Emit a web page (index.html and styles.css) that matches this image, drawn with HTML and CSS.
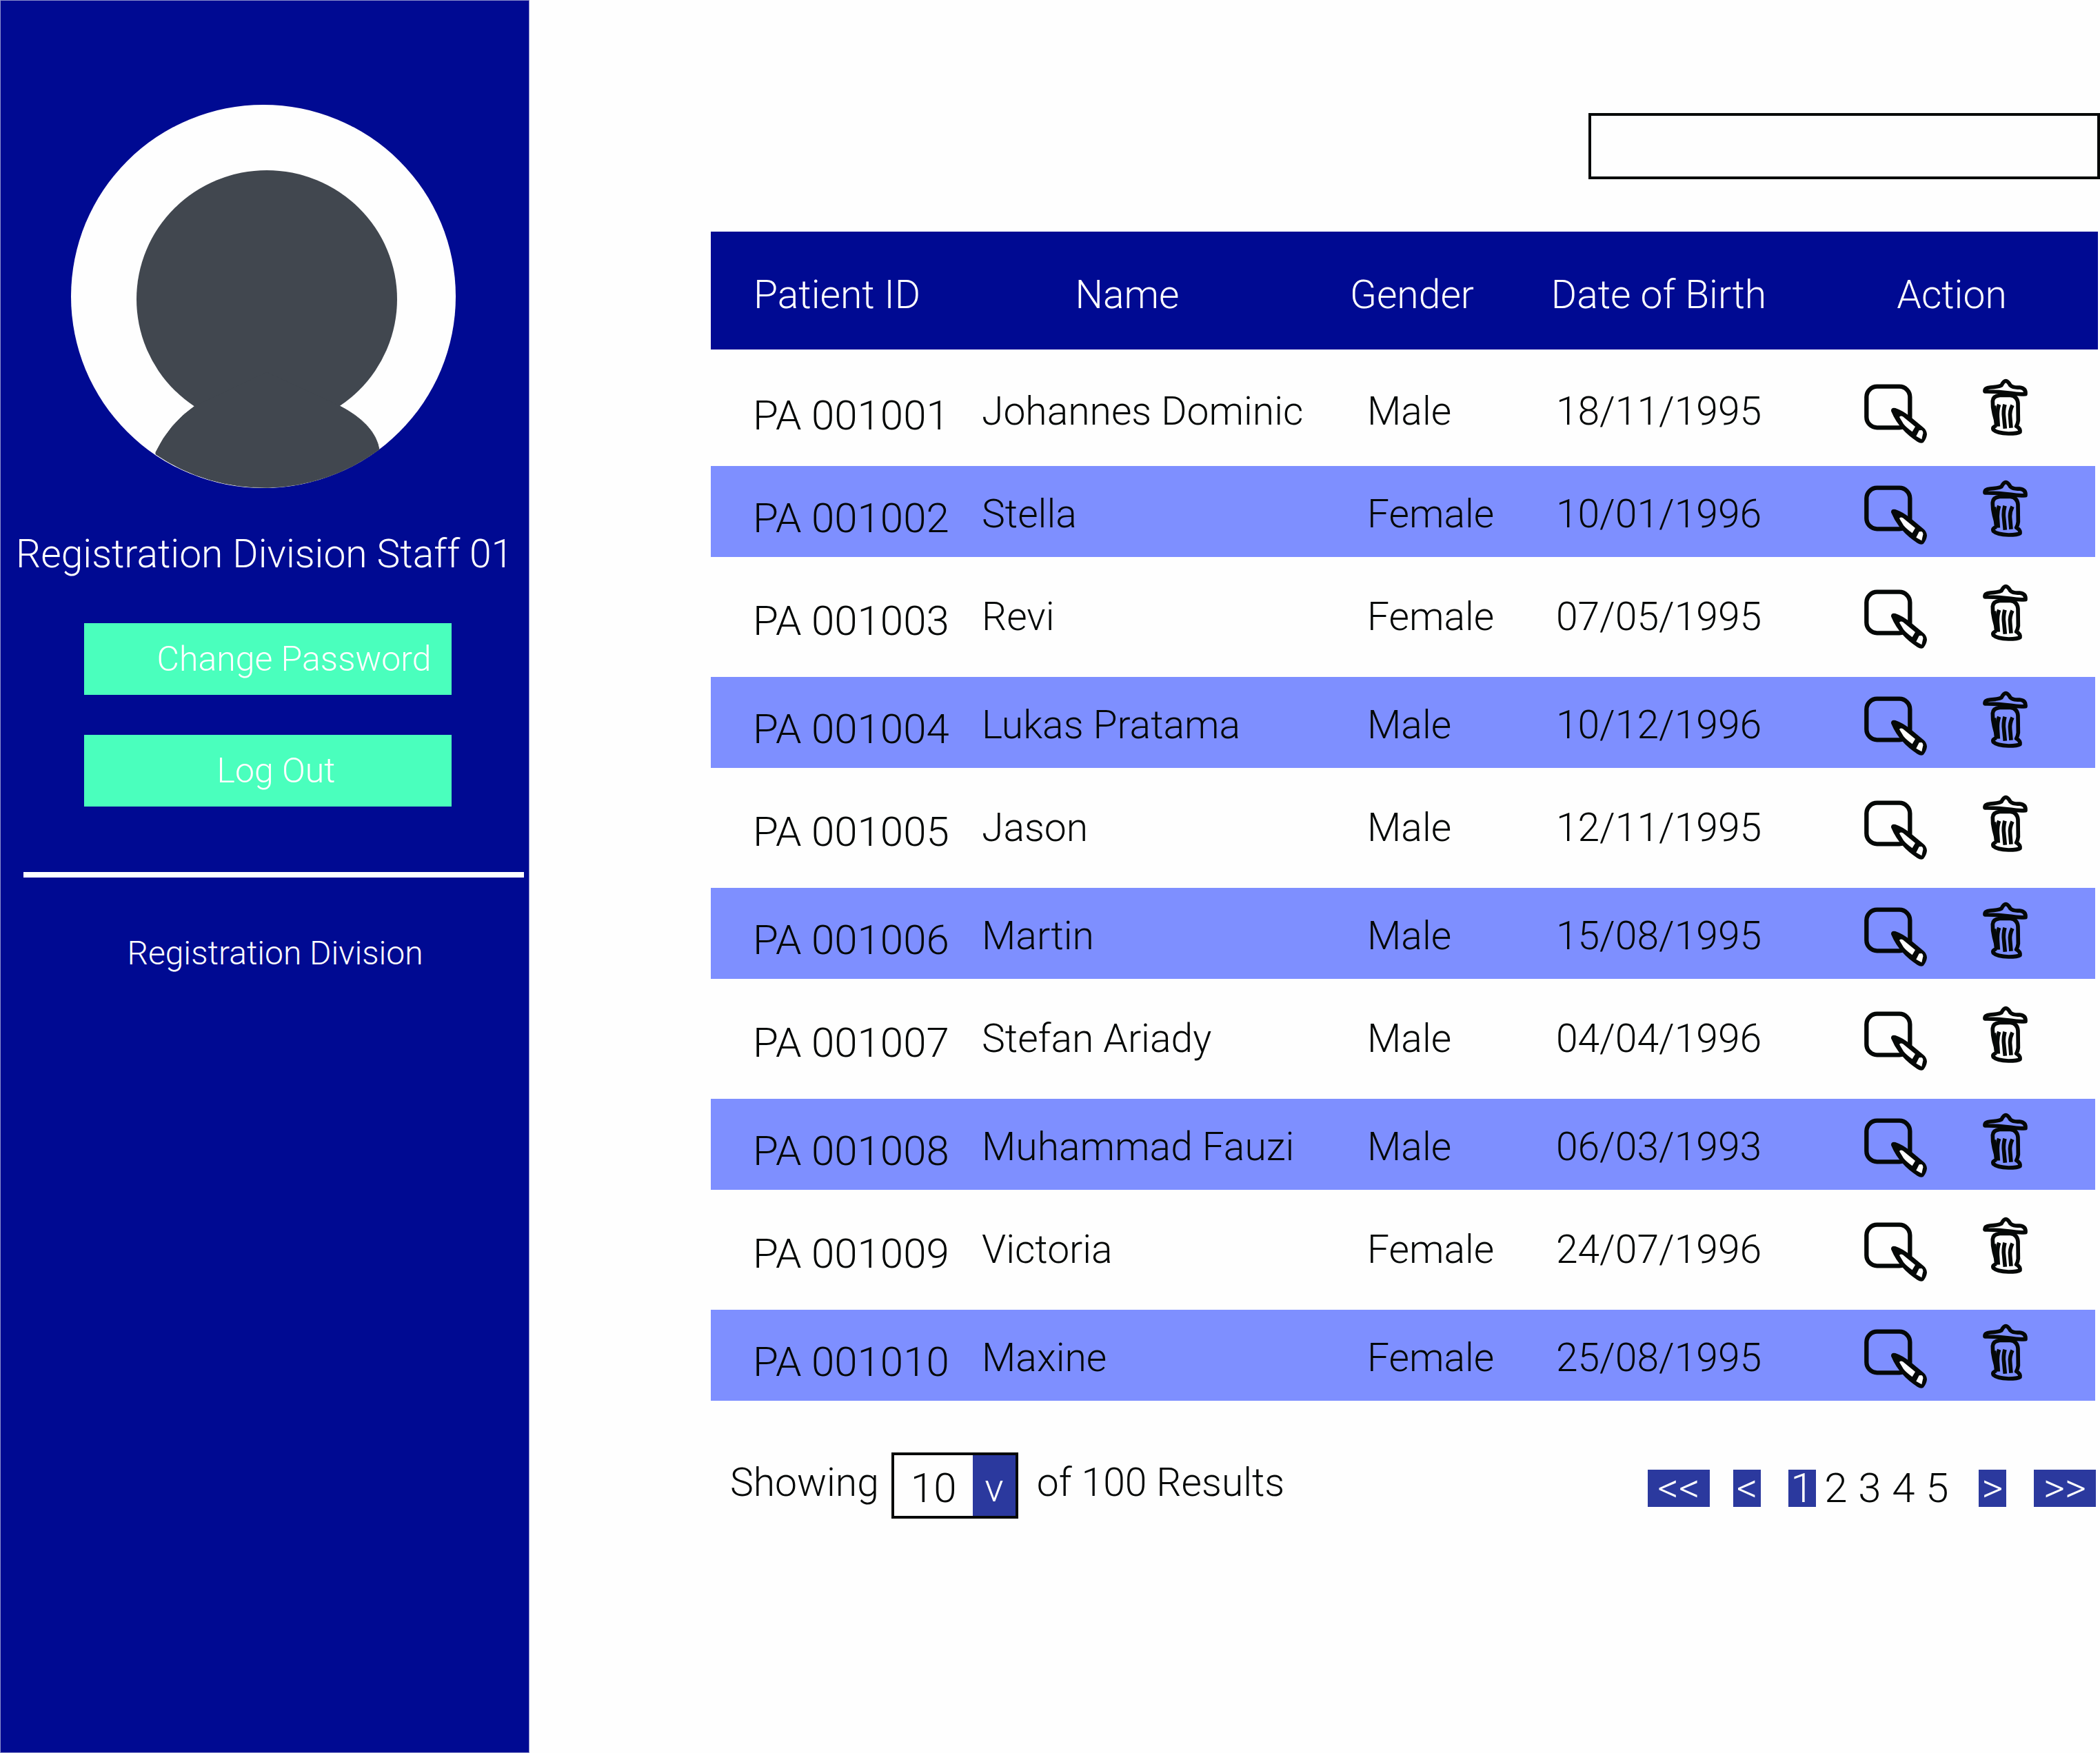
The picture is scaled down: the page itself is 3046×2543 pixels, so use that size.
FILE: index.html
```html
<!DOCTYPE html>
<html lang="en">
<head>
<meta charset="utf-8">
<title>Registration Division</title>
<link rel="stylesheet" href="styles.css">
</head>
<body>
<svg class="sprite" aria-hidden="true">
  <symbol id="icon-edit" viewBox="129 82 279 288">
    <rect x="142" y="117" width="189" height="179" rx="46" fill="none" stroke="#050807" stroke-width="19"/>
    <path fill="#050807" d="M249 224Q248 207 268 211Q300 222 332 248L388 294Q404 306 405 325Q403 345 389 361Q378 367 363 357Q322 330 300 304Q268 270 249 224Z"/>
    <path fill="#fefefe" d="M285 250Q289 242 300 248L354 292L341 314Q315 295 303 280Z"/>
    <path fill="#fefefe" d="M371 308L382 307Q389 311 388 320L382 347L358 333Z"/>
  </symbol>
  <symbol id="icon-trash" viewBox="645 82 201 288">
    <g fill="none" stroke="#050807" stroke-width="17" stroke-linejoin="round">
      <path d="M657 139Q655 123 680 121Q715 119 729 112Q739 93 748 93Q757 93 768 112Q780 123 808 121Q836 124 834 150Q800 152 770 146Q710 138 657 139Z"/>
      <path d="M707 289Q706 262 697 235Q690 208 691 180Q693 158 722 155L768 155Q798 158 801 190L802 265Q800 280 794 290Q812 300 810 315Q800 322 760 322Q710 320 694 305Q688 294 707 287"/>
      <path d="M719 195Q710 220 712 250L715 291M744 195Q736 225 740 250L745 300M777 198Q764 225 767 250L771 297"/>
      <path d="M700 200Q703 250 714 288" stroke-width="12"/>
      <path d="M715 147L795 150" stroke-width="12"/>
    </g>
  </symbol>
</svg>
<div class="app">
  <aside class="sidebar">
    <svg class="avatar" viewBox="103 152 558 556" role="img" aria-label="User avatar">
      <ellipse cx="382" cy="430" rx="279" ry="278" fill="#fefefe"/>
      <ellipse cx="387" cy="434" rx="189" ry="187" fill="#41474f"/>
      <path fill="#41474f" stroke="#41474f" stroke-width="1" d="M284 588Q246 614 226 656L226 659A279 278 0 0 0 550 652Q544 615 491 588L387 540Z"/>
    </svg>
    <p class="staff">Registration Division Staff 01</p>
    <div class="buttons">
      <button class="btn btn-password" type="button">Change Password</button>
      <button class="btn btn-logout" type="button">Log Out</button>
    </div>
    <hr class="rule">
    <a class="division" href="#">Registration Division</a>
  </aside>
  <main class="main">
    <input class="search" type="search" aria-label="Search patients">
    <table class="patients">
      <colgroup><col class="c-id"><col class="c-name"><col class="c-gender"><col class="c-dob"><col></colgroup>
      <thead>
        <tr><th>Patient ID</th><th>Name</th><th>Gender</th><th>Date of Birth</th><th class="h-action">Action</th></tr>
      </thead>
      <tbody>
        <tr><td>PA 001001</td><td>Johannes Dominic</td><td>Male</td><td>18/11/1995</td><td><div class="actions"><button type="button" aria-label="Edit"><svg class="edit"><use href="#icon-edit"/></svg></button><button type="button" aria-label="Delete"><svg class="trash"><use href="#icon-trash"/></svg></button></div></td></tr>
        <tr><td>PA 001002</td><td>Stella</td><td>Female</td><td>10/01/1996</td><td><div class="actions"><button type="button" aria-label="Edit"><svg class="edit"><use href="#icon-edit"/></svg></button><button type="button" aria-label="Delete"><svg class="trash"><use href="#icon-trash"/></svg></button></div></td></tr>
        <tr><td>PA 001003</td><td>Revi</td><td>Female</td><td>07/05/1995</td><td><div class="actions"><button type="button" aria-label="Edit"><svg class="edit"><use href="#icon-edit"/></svg></button><button type="button" aria-label="Delete"><svg class="trash"><use href="#icon-trash"/></svg></button></div></td></tr>
        <tr><td>PA 001004</td><td>Lukas Pratama</td><td>Male</td><td>10/12/1996</td><td><div class="actions"><button type="button" aria-label="Edit"><svg class="edit"><use href="#icon-edit"/></svg></button><button type="button" aria-label="Delete"><svg class="trash"><use href="#icon-trash"/></svg></button></div></td></tr>
        <tr><td>PA 001005</td><td>Jason</td><td>Male</td><td>12/11/1995</td><td><div class="actions"><button type="button" aria-label="Edit"><svg class="edit"><use href="#icon-edit"/></svg></button><button type="button" aria-label="Delete"><svg class="trash"><use href="#icon-trash"/></svg></button></div></td></tr>
        <tr><td>PA 001006</td><td>Martin</td><td>Male</td><td>15/08/1995</td><td><div class="actions"><button type="button" aria-label="Edit"><svg class="edit"><use href="#icon-edit"/></svg></button><button type="button" aria-label="Delete"><svg class="trash"><use href="#icon-trash"/></svg></button></div></td></tr>
        <tr><td>PA 001007</td><td>Stefan Ariady</td><td>Male</td><td>04/04/1996</td><td><div class="actions"><button type="button" aria-label="Edit"><svg class="edit"><use href="#icon-edit"/></svg></button><button type="button" aria-label="Delete"><svg class="trash"><use href="#icon-trash"/></svg></button></div></td></tr>
        <tr><td>PA 001008</td><td>Muhammad Fauzi</td><td>Male</td><td>06/03/1993</td><td><div class="actions"><button type="button" aria-label="Edit"><svg class="edit"><use href="#icon-edit"/></svg></button><button type="button" aria-label="Delete"><svg class="trash"><use href="#icon-trash"/></svg></button></div></td></tr>
        <tr><td>PA 001009</td><td>Victoria</td><td>Female</td><td>24/07/1996</td><td><div class="actions"><button type="button" aria-label="Edit"><svg class="edit"><use href="#icon-edit"/></svg></button><button type="button" aria-label="Delete"><svg class="trash"><use href="#icon-trash"/></svg></button></div></td></tr>
        <tr><td>PA 001010</td><td>Maxine</td><td>Female</td><td>25/08/1995</td><td><div class="actions"><button type="button" aria-label="Edit"><svg class="edit"><use href="#icon-edit"/></svg></button><button type="button" aria-label="Delete"><svg class="trash"><use href="#icon-trash"/></svg></button></div></td></tr>
      </tbody>
    </table>
    <footer class="footer">
      <div class="showing">
        <label for="page-size">Showing</label>
        <div class="select">
          <select id="page-size"><option>10</option><option>25</option><option>50</option></select>
          <span class="arrow" aria-hidden="true">v</span>
        </div>
        <span class="total">of 100 Results</span>
      </div>
      <nav class="pager" aria-label="Pages">
        <div class="prev"><a class="step wide" href="#">&lt;&lt;</a><a class="step" href="#">&lt;</a></div>
        <div class="pages"><a class="step" href="#" aria-current="page">1</a><a href="#">2</a><a href="#">3</a><a href="#">4</a><a href="#">5</a></div>
        <a class="step" href="#">&gt;</a>
        <a class="step wide" href="#">&gt;&gt;</a>
      </nav>
    </footer>
  </main>
</div>
</body>
</html>
```
FILE: styles.css
```css
* { box-sizing: border-box; }
body {
  margin: 0;
  background: #fefefe;
  color: #050807;
  font: 300 57px/72px Roboto, "Liberation Sans", sans-serif;
}
button, input, select { font: inherit; color: inherit; }
a { color: inherit; text-decoration: none; }
.sprite { position: absolute; width: 0; height: 0; }

.app { display: flex; min-height: 100vh; }

.sidebar {
  flex: 0 0 768px;
  min-width: 0;
  display: flex;
  flex-direction: column;
  padding-top: 151px;
  border: 1px solid #8c90cc;
  background: #000a92;
  color: #fefefe;
}
.avatar { display: block; width: 558px; height: 556px; margin-left: 102px; }
.staff { margin: 60px 0 0 22px; white-space: nowrap; }
.buttons {
  display: flex;
  flex-direction: column;
  gap: 58px;
  margin: 64px 112px 0 121px;
}
.btn {
  height: 104px;
  padding: 0;
  border: 0;
  background: #4affbd;
  font-size: 50px;
  line-height: 60px;
}
.btn-password { padding-left: 76px; }
.btn-logout { padding-left: 24px; }
.rule { width: auto; height: 8px; margin: 95px 7px 0 33px; border: 0; background: #fefefe; }
.division { margin: 80px 0 0 30px; font-size: 48px; line-height: 60px; text-align: center; }

.main { flex: 1; min-width: 0; padding: 164px 0 0 263px; }
.search {
  display: block;
  width: 742px;
  height: 96px;
  margin-left: auto;
  padding: 0 20px;
  border: 4px solid #050807;
  border-radius: 0;
  background: #fefefe;
  appearance: none;
}
.patients {
  width: calc(100% - 3px);
  margin-top: 76px;
  table-layout: fixed;
  border-spacing: 0;
}
.c-id { width: 366px; }
.c-name { width: 476px; }
.c-gender { width: 350px; }
.c-dob { width: 366px; }
.patients th {
  height: 171px;
  padding: 12px 0 0;
  background: #000a92;
  color: #fefefe;
  font-weight: 300;
}
.patients .h-action { padding-left: 30px; }
.patients td { height: 132px; padding: 8px 0 0; white-space: nowrap; }
.patients tr:nth-child(odd) td { height: 174px; padding-top: 0; }
.patients tr:first-child td { height: 169px; padding-top: 10px; }
.patients tr:nth-child(even) td { background: #7e8fff; }
.patients tr td:nth-child(1) { padding-left: 61px; font-size: 60px; line-height: 60px; }
.patients tr td:nth-child(1)::before { content: ""; display: block; height: 12px; }
.patients tr td:nth-child(2) { padding-left: 27px; }
.patients tr td:nth-child(3) { padding-left: 110px; }
.patients tr td:nth-child(4) { text-align: center; }
.patients tr td:nth-child(5) { padding-left: 114px; border-right: 4px solid #fefefe; }
.patients tr:nth-child(even) td:nth-child(5) { padding-top: 4px; }
.actions { display: flex; gap: 79px; }
.actions button { padding: 0; border: 0; background: none; }
.actions svg { display: block; height: 96px; }
.edit { width: 93px; }
.trash { width: 67px; }

.footer {
  display: flex;
  justify-content: space-between;
  align-items: center;
  padding: 75px 6px 0 28px;
}
.showing { display: flex; align-items: center; }
.showing label, .total { padding-bottom: 8px; }
.select {
  display: grid;
  grid-template-columns: 1fr 62px;
  width: 184px;
  height: 96px;
  margin: 0 27px 0 18px;
  border: 4px solid #050807;
}
.select select {
  grid-area: 1 / 1 / 2 / 3;
  padding: 8px 0 0 24px;
  border: 0;
  border-radius: 0;
  background: #fefefe;
  font-size: 60px;
  appearance: none;
}
.arrow {
  grid-area: 1 / 2 / 2 / 3;
  padding-top: 12px;
  background: #2b399e;
  color: #fefefe;
  text-align: center;
  pointer-events: none;
}
.pager {
  display: flex;
  gap: 40px;
  padding-top: 8px;
  font-size: 60px;
  line-height: 54px;
  text-align: center;
}
.prev { display: flex; gap: 34px; }
.pages { display: flex; gap: 9px; }
.pages a { width: 40px; }
.step { width: 40px; height: 54px; background: #2b399e; color: #fefefe; }
.wide { width: 90px; }
```
